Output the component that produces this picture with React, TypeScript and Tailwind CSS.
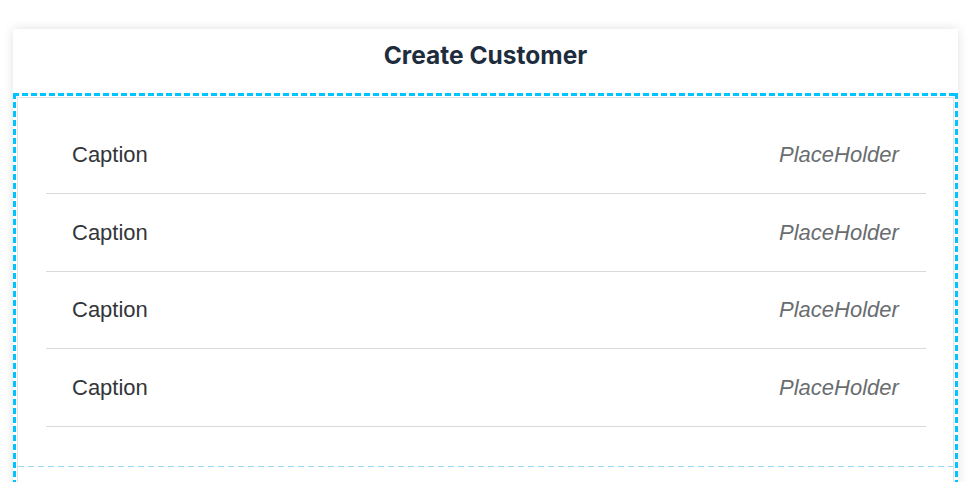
import React from "react";

const rows = [0, 1, 2, 3];

export default function App() {
  return (
    <div className="w-[976px] h-[482px] overflow-hidden bg-white pt-[29px] px-[13px] [font-family:'Liberation_Sans','Open_Sans',sans-serif]">
      <div className="w-[945px] h-[470px] bg-white shadow-[0_0_10px_rgba(0,0,0,0.12)] flex flex-col">
        <div className="h-[64px] shrink-0 flex justify-center pt-[10px]">
          <h1 className="text-[24.5px] leading-[32px] font-bold text-[#1d2d3e] [font-family:'Inter','Liberation_Sans',sans-serif]">
            Create Customer
          </h1>
        </div>
        <div className="flex-1 p-[4px] pb-0 bg-no-repeat [background-image:repeating-linear-gradient(90deg,#00c4ff_0_6px,transparent_6px_9px),repeating-linear-gradient(180deg,#00c4ff_0_6px,transparent_6px_9px),repeating-linear-gradient(180deg,#00c4ff_0_6px,transparent_6px_9px)] [background-size:100%_3px,3px_100%,3px_100%] [background-position:0_0,0_0,100%_0]">
          <div className="h-full border border-b-0 border-[#e3e3e3] flex flex-col">
            <div className="pt-[18.5px] pl-[28px] pr-[27px]">
              {rows.map((i) => (
                <div
                  key={i}
                  className="h-[77.5px] border-b border-[#d9d9d9] flex items-center justify-between pl-[26px] pr-[26px]"
                >
                  <span className="text-[22px] text-[#32363a]">Caption</span>
                  <div className="w-[121px] overflow-hidden whitespace-nowrap">
                    <span className="text-[22px] italic text-[#6a6d70]">PlaceHolder</span>
                  </div>
                </div>
              ))}
            </div>
            <div className="h-[39px]" />
            <div className="h-px bg-[repeating-linear-gradient(90deg,#9bdcf3_0_6px,transparent_6px_10px)]" />
            <div className="flex-1" />
          </div>
        </div>
      </div>
    </div>
  );
}
